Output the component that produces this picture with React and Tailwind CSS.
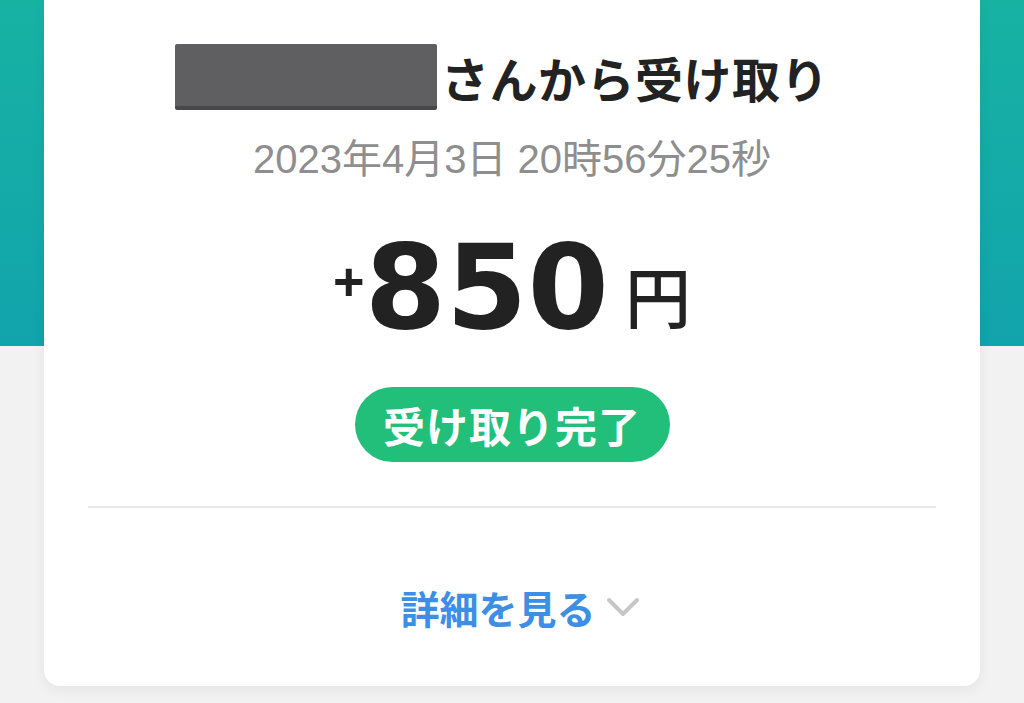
import React from 'react';

const jp = { fontFamily: '"Noto Sans CJK JP", "Noto Sans", sans-serif' };
const latinJp = { fontFamily: '"Liberation Sans", "Noto Sans CJK JP", sans-serif' };

function Chevron() {
    return (
        <svg width="34" height="22" viewBox="0 0 34 22" fill="none">
            <path d="M3 3 L17 17 L31 3" stroke="#c6c6c8" strokeWidth="4" strokeLinecap="round" strokeLinejoin="round" />
        </svg>
    );
}

function ReceiptCard() {
    return (
        <div className="mx-[44px] w-[936px] h-[686px] bg-white rounded-b-[16px] shadow-[0_4px_14px_rgba(0,0,0,0.06)] flex flex-col items-center" style={jp}>
            <div className="flex items-center mt-[44px] h-[66px] pr-[20px]">
                {/* redacted sender name */}
                <div className="w-[262px] h-[66px] bg-[#5f5f62] rounded-[2px] border-b-[4px] border-[#47474c]" />
                <span className="ml-[4px] text-[48px] font-bold text-[#222222] leading-none tracking-[0.5px]">さんから受け取り</span>
            </div>
            <div className="mt-[29px] h-[40px] text-[40px] text-[#8e8e8e] leading-none" style={latinJp}>
                2023年4月3日 20時56分25秒
            </div>
            <div className="mt-[50px] flex items-end h-[117px]">
                <span className="self-start mt-[25px] text-[54px] font-bold text-[#222222] leading-none" style={{ fontFamily: '"Liberation Sans", Arial, sans-serif' }}>+</span>
                <span className="text-[117px] font-bold text-[#222222] leading-none" style={{ fontFamily: '"DejaVu Sans", sans-serif' }}>850</span>
                <span className="ml-[16px] mb-[19px] text-[66px] font-medium text-[#222222] leading-none">円</span>
            </div>
            <div className="mt-[41px] w-[315px] h-[75px] rounded-full bg-[#21bf79] flex items-center justify-center">
                <span className="text-[42px] font-bold text-white leading-none tracking-[1px]">受け取り完了</span>
            </div>
            <div className="mt-[44px] w-[848px] h-[2px] bg-[#e9e9e9]" />
            <button className="mt-[80px] pl-[16px] flex items-center gap-[10px]">
                <span className="text-[39px] font-bold text-[#3d8fe6] leading-none">詳細を見る</span>
                <Chevron />
            </button>
        </div>
    );
}

export default function App() {
    return (
        <div className="min-h-screen bg-[linear-gradient(to_bottom,#18b2a3_0px,#11a4ac_346px,#f2f2f2_346px,#f2f2f2_100%)]">
            <ReceiptCard />
        </div>
    );
}
